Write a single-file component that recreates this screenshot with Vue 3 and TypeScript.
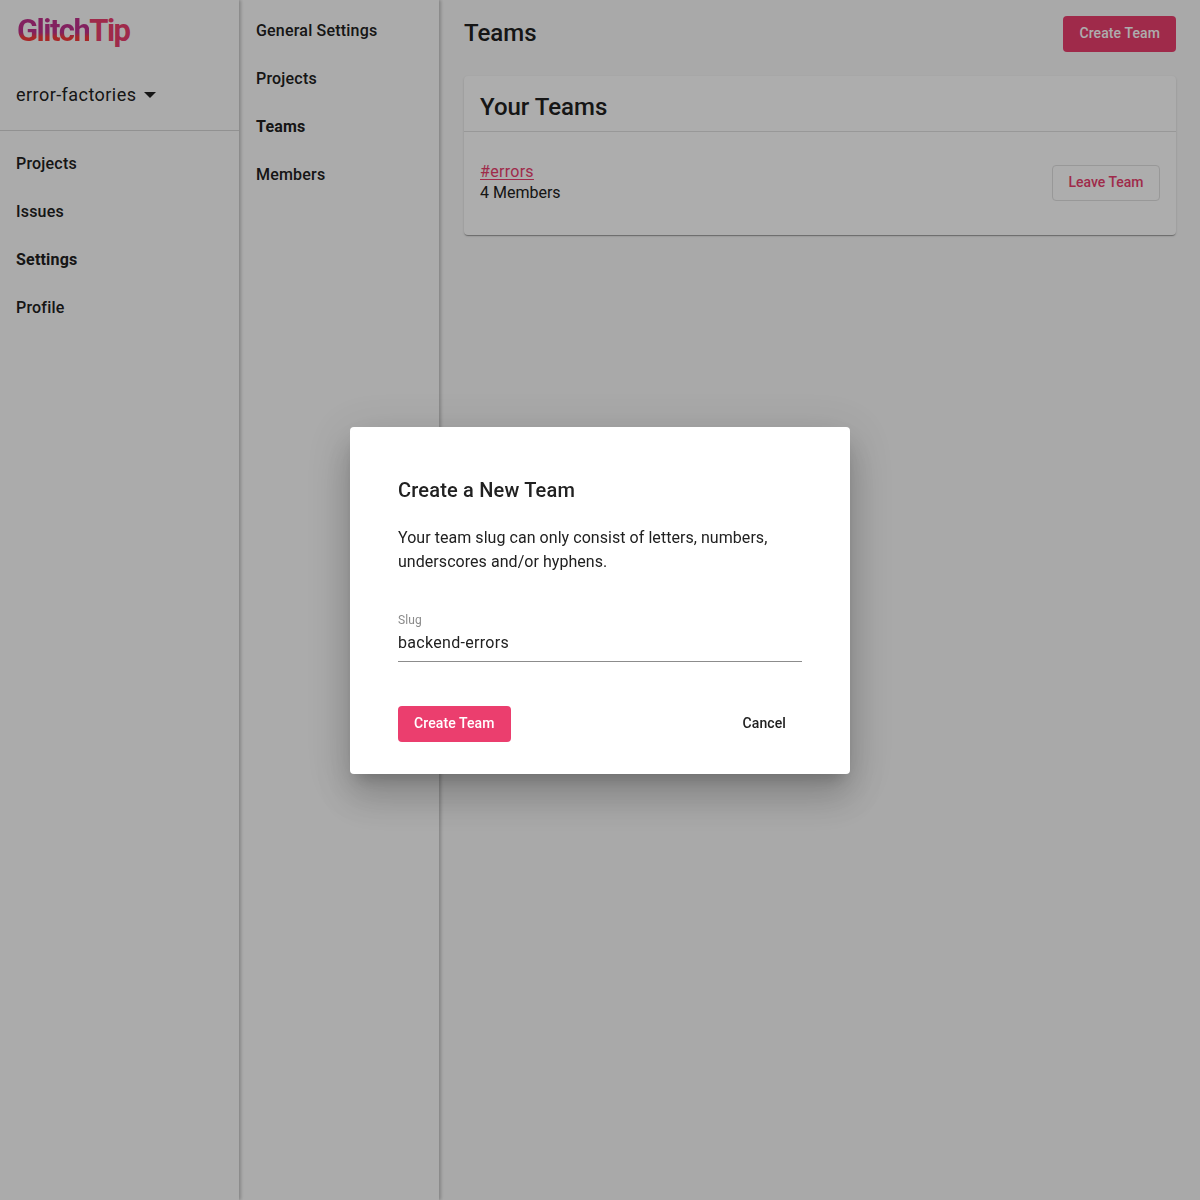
<script setup lang="ts">
const mainNav = ['Projects', 'Issues', 'Settings', 'Profile']
const settingsNav = ['General Settings', 'Projects', 'Teams', 'Members']
</script>

<template>
  <div class="shell">
    <aside class="sidebar">
      <div class="logo"><span class="logo-glitch">Glitch</span><span class="logo-tip">Tip</span></div>
      <button class="org-select">
        <span>error-factories</span>
        <span class="caret"></span>
      </button>
      <nav class="nav main-nav">
        <a v-for="item in mainNav" :key="item" :class="{ active: item === 'Settings' }">{{ item }}</a>
      </nav>
    </aside>

    <aside class="subnav">
      <nav class="nav">
        <a v-for="item in settingsNav" :key="item" :class="{ active: item === 'Teams' }">{{ item }}</a>
      </nav>
    </aside>

    <main class="content">
      <header class="page-head">
        <h1>Teams</h1>
        <button class="btn primary">Create Team</button>
      </header>
      <section class="card">
        <h2>Your Teams</h2>
        <div class="team-row">
          <div class="team-info">
            <a class="team-link">#errors</a>
            <div>4 Members</div>
          </div>
          <button class="btn stroked">Leave Team</button>
        </div>
      </section>
    </main>

    <div class="backdrop">
      <div class="dialog">
        <h3>Create a New Team</h3>
        <p>Your team slug can only consist of letters, numbers, underscores and/or hyphens.</p>
        <label class="field">
          <span class="field-label">Slug</span>
          <input value="backend-errors" />
        </label>
        <div class="dialog-actions">
          <button class="btn primary">Create Team</button>
          <button class="btn plain">Cancel</button>
        </div>
      </div>
    </div>
  </div>
</template>

<style scoped>
.shell {
  display: flex;
  min-height: 1200px;
  background: #fafafa;
  color: #212121;
  font-family: Roboto, "Liberation Sans", sans-serif;
  font-size: 16px;
}

.sidebar {
  width: 239px;
  flex-shrink: 0;
  background: #fdfdfd;
  box-shadow: 2px 0 3px rgba(0, 0, 0, 0.22);
  position: relative;
  z-index: 2;
}

.logo {
  height: 62px;
  padding: 13px 0 0 17px;
  box-sizing: border-box;
  font-size: 31px;
  line-height: 36px;
  font-weight: 700;
  letter-spacing: -1.55px;
}

.logo-glitch {
  background: linear-gradient(180deg, #c0328c 55%, #f53c3c 68%);
  -webkit-background-clip: text;
  background-clip: text;
  color: transparent;
}

.logo-tip {
  color: #eb3e6e;
}

.org-select {
  display: flex;
  align-items: center;
  gap: 8px;
  width: 100%;
  height: 69px;
  padding: 0 16px 3px;
  border: 0;
  border-bottom: 1px solid #d6d6d6;
  background: none;
  color: inherit;
  font: inherit;
  font-size: 18px;
  letter-spacing: 0.45px;
  text-align: left;
}

.caret {
  width: 0;
  height: 0;
  border-left: 6px solid transparent;
  border-right: 6px solid transparent;
  border-top: 6px solid #212121;
}

.nav {
  display: flex;
  flex-direction: column;
}

.main-nav {
  margin-top: 8px;
}

.nav a {
  display: flex;
  align-items: center;
  height: 48px;
  padding: 0 16px;
  font-size: 16px;
  font-weight: 500;
  letter-spacing: 0.2px;
}

.subnav .nav a {
  padding-left: 17px;
}

.nav a.active {
  font-weight: 700;
}

.subnav {
  width: 200px;
  flex-shrink: 0;
  padding-top: 6px;
  box-sizing: border-box;
  background: #fdfdfd;
  box-shadow: 2px 0 3px rgba(0, 0, 0, 0.22);
  position: relative;
  z-index: 1;
}

.content {
  flex: 1;
  padding: 16px 24px 16px 25px;
}

.page-head {
  display: flex;
  justify-content: space-between;
  align-items: center;
  margin-bottom: 24px;
}

h1 {
  margin: 0;
  padding-bottom: 3px;
  font-size: 24px;
  font-weight: 500;
}

.btn {
  height: 36px;
  padding: 0 16px 2px;
  border: 0;
  border-radius: 4px;
  font: inherit;
  font-size: 14px;
  font-weight: 500;
  letter-spacing: 0.1px;
}

.primary {
  background: #eb3e6e;
  color: #fff;
}

.stroked {
  width: 108px;
  padding: 0 0 2px;
  background: none;
  border: 1px solid #e0e0e0;
  color: #eb3e6e;
  letter-spacing: 0;
}

/* faint leftovers at the corners of the cancel button */
.plain {
  background:
    linear-gradient(#cfcfcf, #cfcfcf) 0 0 / 1px 1px no-repeat,
    linear-gradient(#cfcfcf, #cfcfcf) 100% 0 / 1px 1px no-repeat,
    linear-gradient(#eeeeee, #eeeeee) 0 100% / 1px 1px no-repeat,
    linear-gradient(#eeeeee, #eeeeee) 100% 100% / 1px 1px no-repeat,
    #fff;
  color: #212121;
}

.card {
  border-radius: 4px;
  background: #fff;
  box-shadow: 0 2px 1px -1px rgba(0, 0, 0, 0.2), 0 1px 1px rgba(0, 0, 0, 0.14), 0 1px 3px rgba(0, 0, 0, 0.12);
}

.card h2 {
  margin: 0;
  height: 56px;
  padding: 0 16px;
  border-bottom: 1px solid #e0e0e0;
  box-sizing: border-box;
  font-size: 24px;
  font-weight: 500;
  line-height: 62px;
}

.team-row {
  display: flex;
  justify-content: space-between;
  align-items: center;
  height: 103px;
  padding: 0 16px 2px;
  box-sizing: border-box;
}

.team-info {
  margin-bottom: 2px;
  line-height: 21px;
}

.team-link {
  color: #eb3e6e;
  letter-spacing: 0.3px;
  text-decoration: underline;
  text-underline-offset: 2px;
}

.backdrop {
  position: fixed;
  inset: 0;
  z-index: 10;
  display: flex;
  align-items: center;
  justify-content: center;
  background: rgba(0, 0, 0, 0.32);
}

.dialog {
  width: 500px;
  height: 347px;
  padding: 48px;
  box-sizing: border-box;
  border-radius: 4px;
  background: #fff;
  box-shadow: 0 11px 15px -7px rgba(0, 0, 0, 0.2), 0 24px 38px 3px rgba(0, 0, 0, 0.14), 0 9px 46px 8px rgba(0, 0, 0, 0.12);
}

.dialog h3 {
  margin: 0 0 21px;
  font-size: 20px;
  font-weight: 500;
  letter-spacing: 0.18px;
  line-height: 30px;
}

.dialog p {
  margin: 0;
  letter-spacing: 0.05px;
  line-height: 24px;
}

.field {
  display: block;
  margin-top: 39px;
  border-bottom: 1px solid #8c8c8c;
}

.field-label {
  display: block;
  font-size: 12px;
  letter-spacing: 0.1px;
  line-height: 15px;
  color: #8a8a8a;
}

.field input {
  display: block;
  width: 100%;
  height: 33px;
  box-sizing: border-box;
  padding: 0 0 3px;
  border: 0;
  outline: 0;
  font: inherit;
  letter-spacing: 0.3px;
  color: inherit;
}

.dialog-actions {
  display: flex;
  justify-content: space-between;
  margin-top: 44px;
}
</style>

<style>
body {
  margin: 0;
}
</style>
